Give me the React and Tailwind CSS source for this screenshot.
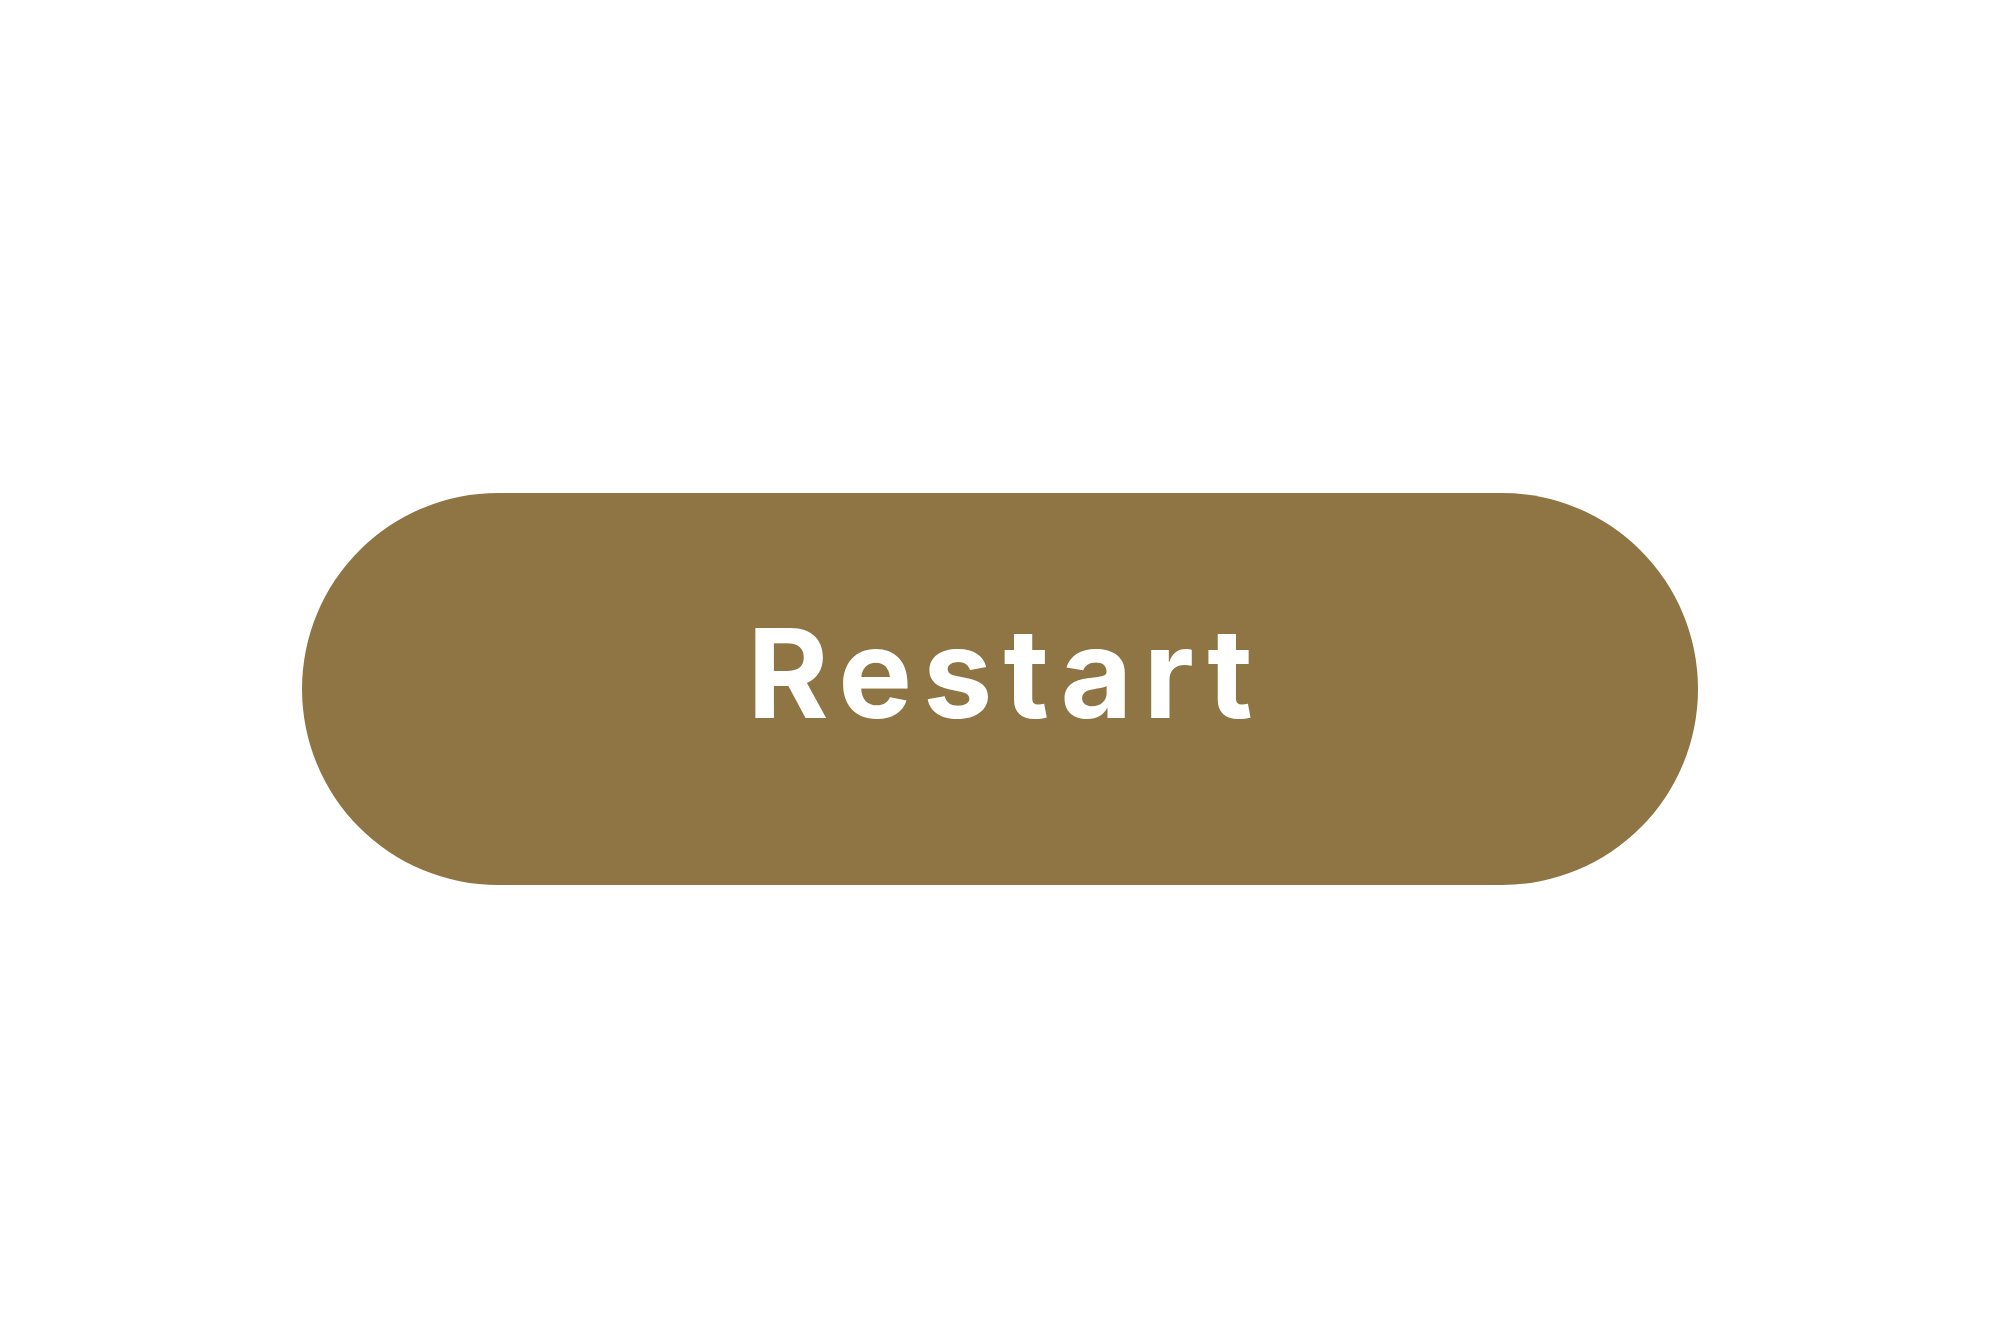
export default function App() {
  return (
    <div className="w-full min-h-[1333px] bg-white flex items-center justify-center">
      <button
        className="mt-[44px] w-[1396px] h-[392px] rounded-full bg-[#8e7543] text-white flex items-center justify-center"
        style={{ fontFamily: 'Inter, "Liberation Sans", sans-serif' }}
      >
        <span className="text-[124px] font-bold leading-none tracking-[11px] pl-[11px] pb-[32px]">Restart</span>
      </button>
    </div>
  );
}
